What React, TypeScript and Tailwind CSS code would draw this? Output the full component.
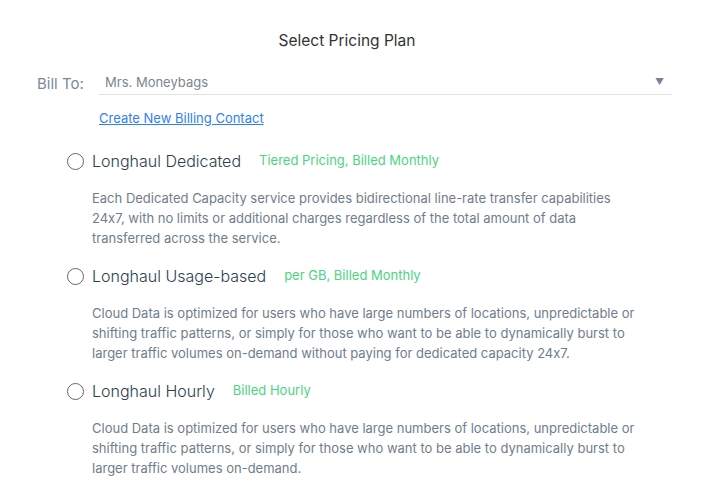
const plans = [
  {
    name: "Longhaul Dedicated",
    tag: "Tiered Pricing, Billed Monthly",
    desc: [
      "Each Dedicated Capacity service provides bidirectional line-rate transfer capabilities",
      "24x7, with no limits or additional charges regardless of the total amount of data",
      "transferred across the service.",
    ],
  },
  {
    name: "Longhaul Usage-based",
    tag: "per GB, Billed Monthly",
    desc: [
      "Cloud Data is optimized for users who have large numbers of locations, unpredictable or",
      "shifting traffic patterns, or simply for those who want to be able to dynamically burst to",
      "larger traffic volumes on-demand without paying for dedicated capacity 24x7.",
    ],
  },
  {
    name: "Longhaul Hourly",
    tag: "Billed Hourly",
    desc: [
      "Cloud Data is optimized for users who have large numbers of locations, unpredictable or",
      "shifting traffic patterns, or simply for those who want to be able to dynamically burst to",
      "larger traffic volumes on-demand.",
    ],
  },
];

export default function App() {
  return (
    <div className="w-[727px] h-[493px] bg-white overflow-hidden font-['Inter',sans-serif] [font-feature-settings:'calt'_0]">
      <h1 className="w-[694px] pt-[31px] text-center text-[15.5px] leading-5 text-[#333]">Select Pricing Plan</h1>

      <div className="mt-[21px] flex items-center pl-[37px]">
        <span className="w-[62px] text-[15px] leading-5 text-[#7a8a9a]">Bill To:</span>
        <div className="w-[573px] flex items-center justify-between border-b border-[#e2e2e2] pl-[6px] pr-[8px] pb-[2px]">
          <span className="text-[13px] leading-5 text-[#7d8690]">Mrs. Moneybags</span>
          <span className="text-[9px] text-[#73849a]">▼</span>
        </div>
      </div>

      <a href="#" className="block w-fit ml-[99px] mt-[13px] text-[13px] leading-5 text-[#2f7ff5] underline">
        Create New Billing Contact
      </a>

      <div className="mt-[21px] flex flex-col gap-[16px]">
        {plans.map((p) => (
          <div key={p.name} className="pl-[67px]">
            <label className="flex items-center h-[24px]">
              <span className="w-[17px] h-[17px] rounded-full border border-[#666] bg-white" />
              <span className="ml-[8px] text-[16px] font-light text-[#2c3e50]">{p.name}</span>
              <span className="ml-[18px] text-[13px] text-[#4cd482]">{p.tag}</span>
            </label>
            <div className="mt-[15px] pl-[25px] text-[13px] leading-5 text-[#6f7d8c]">
              {p.desc.map((l) => (
                <div key={l}>{l}</div>
              ))}
            </div>
          </div>
        ))}
      </div>
    </div>
  );
}
